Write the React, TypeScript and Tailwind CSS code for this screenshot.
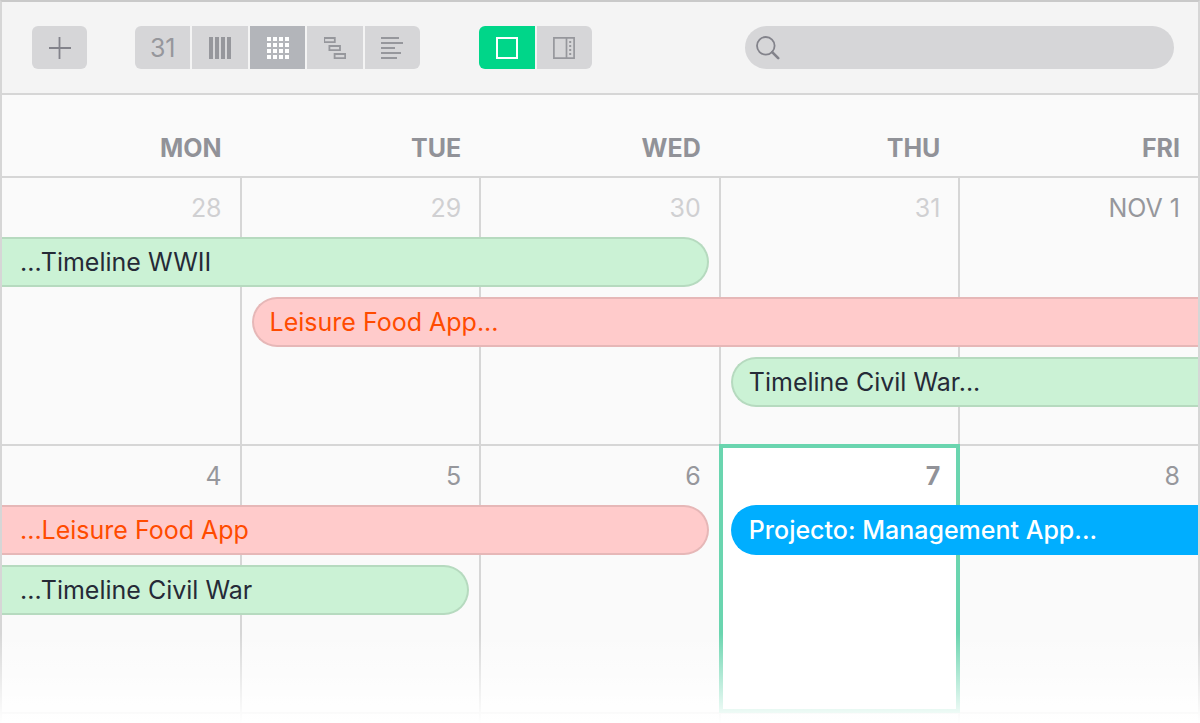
import { useState } from 'react';
import type { ReactNode } from 'react';
import clsx from 'clsx';

type Day = { label: string; muted?: boolean; today?: boolean };
type CalendarEvent = { title: string; tone: 'green' | 'red' | 'blue'; place: string };

const weekdays = ['MON', 'TUE', 'WED', 'THU', 'FRI'];

const columns = ['col-start-1', 'col-start-2', 'col-start-3', 'col-start-4', 'col-start-5'];

const tones = {
  green: 'bg-[#cbf2d5] border-[#b6dabf] text-[#252a37]',
  red: 'bg-[#ffcbcb] border-[#e6b7b7] text-[#ff4b00]',
  blue: 'bg-[#00aeff] border-[#00aeff] text-white font-medium',
};

const weeks: { days: Day[]; events: CalendarEvent[] }[] = [
  {
    days: [
      { label: '28', muted: true },
      { label: '29', muted: true },
      { label: '30', muted: true },
      { label: '31', muted: true },
      { label: 'NOV 1' },
    ],
    events: [
      { title: '...Timeline WWII', tone: 'green', place: 'row-start-2 col-start-1 col-end-4 mr-3 pl-[18px] rounded-r-full border-l-0' },
      { title: 'Leisure Food App...', tone: 'red', place: 'row-start-3 col-start-2 col-end-6 ml-2.5 pl-4 rounded-l-full border-r-0' },
      { title: 'Timeline Civil War...', tone: 'green', place: 'row-start-4 col-start-4 col-end-6 ml-2.5 pl-4 rounded-l-full border-r-0' },
    ],
  },
  {
    days: [{ label: '4' }, { label: '5' }, { label: '6' }, { label: '7', today: true }, { label: '8' }],
    events: [
      { title: '...Leisure Food App', tone: 'red', place: 'row-start-2 col-start-1 col-end-4 mr-3 pl-[18px] rounded-r-full border-l-0' },
      { title: 'Projecto: Management App...', tone: 'blue', place: 'row-start-2 col-start-4 col-end-6 ml-2.5 pl-4 rounded-l-full border-r-0' },
      { title: '...Timeline Civil War', tone: 'green', place: 'row-start-3 col-start-1 col-end-3 mr-3 pl-[18px] rounded-r-full border-l-0' },
    ],
  },
];

function Icon({ children }: { children: ReactNode }) {
  return (
    <svg width="22" height="22" viewBox="0 0 22 22" fill="none" aria-hidden="true">
      {children}
    </svg>
  );
}

const views = [
  { id: 'Day', icon: <span className="text-[25px] leading-6">31</span> },
  {
    id: 'Week',
    icon: (
      <Icon>
        <path d="M0 0h4v22H0zM6 0h4v22H6zM12 0h4v22h-4zM18 0h4v22h-4z" fill="currentColor" />
      </Icon>
    ),
  },
  {
    id: 'Month',
    icon: (
      <Icon>
        {[0, 6, 12, 18].map((y) =>
          [0, 6, 12, 18].map((x) => <rect key={`${x}-${y}`} x={x} y={y} width="4" height="4" fill="currentColor" />)
        )}
      </Icon>
    ),
  },
  {
    id: 'Timeline',
    icon: (
      <Icon>
        <path d="M.2 1h10.6v4.2H.2zM5.4 9h10.6v4.2H5.4zM10.6 17h10.6v4.2H10.6z" stroke="currentColor" strokeWidth="1.8" />
      </Icon>
    ),
  },
  {
    id: 'List',
    icon: (
      <Icon>
        <path d="M0 1h18M0 6h22M0 11h14M0 16h20M0 21h16" stroke="currentColor" strokeWidth="1.8" />
      </Icon>
    ),
  },
];

export default function App() {
  const [view, setView] = useState('Month');
  const [sidebar, setSidebar] = useState(false);
  const [query, setQuery] = useState('');

  return (
    <div className="relative font-['Inter',sans-serif]">
      <div className="flex min-h-screen flex-col overflow-hidden border-x-2 border-t-2 border-x-[#d6d6d6] border-t-[#c9c9c9] bg-[#fafafa]">
        {/* Toolbar */}
        <header className="flex items-center border-b-2 border-[#d6d6d6] bg-[#f4f4f4] py-6 pr-6 pl-[30px] text-[#96979c]">
          <button type="button" aria-label="New event" className="flex h-[43px] w-[55px] items-center justify-center rounded-md bg-[#d6d6d8] text-[#83838b]">
            <Icon>
              <path d="M10.5 0v22M0 11h22" stroke="currentColor" strokeWidth="1.8" />
            </Icon>
          </button>

          <div className="ml-12 flex h-[43px] w-[285px] gap-0.5 overflow-hidden rounded-md">
            {views.map(({ id, icon }) => (
              <button
                key={id}
                type="button"
                aria-label={id}
                onClick={() => setView(id)}
                className={clsx('flex flex-1 items-center justify-center', view === id ? 'bg-[#b3b5ba] text-white' : 'bg-[#d6d6d8]')}
              >
                {icon}
              </button>
            ))}
          </div>

          <div className="ml-[59px] flex h-[43px] w-[113px] gap-0.5 overflow-hidden rounded-md">
            <button
              type="button"
              aria-label="Full view"
              onClick={() => setSidebar(false)}
              className={clsx('flex flex-1 items-center justify-center', sidebar ? 'bg-[#d6d6d8]' : 'bg-[#00d689] text-white')}
            >
              <Icon>
                <rect x="1" y="1" width="20" height="20" stroke="currentColor" strokeWidth="2" />
              </Icon>
            </button>
            <button
              type="button"
              aria-label="Split view"
              onClick={() => setSidebar(true)}
              className={clsx('flex flex-1 items-center justify-center', sidebar ? 'bg-[#00d689] text-white' : 'bg-[#d6d6d8]')}
            >
              <Icon>
                <path d="M.9.9h20.2v20.2H.9zM13.5 1v20" stroke="currentColor" strokeWidth="1.7" />
                <path d="M16.2 4h2v2h-2zM16.2 8h2v2h-2zM16.2 12h2v2h-2zM16.2 16h2v2h-2z" fill="currentColor" />
              </Icon>
            </button>
          </div>

          <label className="ml-auto flex h-[43px] w-[429px] items-center gap-2 rounded-full bg-[#d6d6d8] px-[11px] text-[#83838b]">
            <svg width="24" height="24" viewBox="0 0 24 24" fill="none" stroke="currentColor" strokeLinecap="round" aria-hidden="true">
              <circle cx="9.8" cy="9.8" r="8.8" strokeWidth="1.8" />
              <path d="M16.2 16.2l6 6" strokeWidth="2.6" />
            </svg>
            <input
              type="search"
              aria-label="Search"
              value={query}
              onChange={(e) => setQuery(e.target.value)}
              className="min-w-0 flex-1 bg-transparent text-xl outline-none"
            />
          </label>
        </header>

        {/* Weekday names */}
        <div className="-mr-0.5 grid h-[81px] grid-cols-5 items-end pb-2.5 text-right text-[25px] leading-9 font-bold text-[#919298]">
          {weekdays.map((name) => (
            <div key={name} className="pr-5">{name}</div>
          ))}
        </div>

        {/* Weeks */}
        {weeks.map((week, i) => (
          <section key={i} className="-mr-0.5 grid h-[268px] grid-cols-5 grid-rows-[49px_50px_50px_50px_1fr] gap-y-2.5 border-t-2 border-[#d6d6d6]">
            {week.days.map((day, d) => (
              <div
                key={day.label}
                className={clsx(
                  'row-start-1 row-end-6 text-right text-[25px]',
                  columns[d],
                  day.today
                    ? 'z-10 -mt-0.5 -mb-px -ml-0.5 border-4 border-[#6ad5af] bg-white pr-4 leading-[56px] font-bold text-[#919298]'
                    : 'border-r-2 border-[#d6d6d6] pr-[18px] leading-[60px]',
                  !day.today && (day.muted ? 'text-[#d0d0d2]' : 'text-[#96979c]')
                )}
              >
                {day.label}
              </div>
            ))}
            {week.events.map((event) => (
              <div
                key={event.title}
                className={clsx('z-20 truncate border-2 text-[25px] leading-[46px]', tones[event.tone], event.place)}
              >
                {event.title}
              </div>
            ))}
          </section>
        ))}

        {/* Start of the next week, under the fade */}
        <div className="-mr-0.5 grid min-h-[11px] flex-1 grid-cols-5 border-t-2 border-[#d6d6d6]">
          {weekdays.map((name) => (
            <div key={name} className="border-r-2 border-[#d6d6d6]" />
          ))}
        </div>
      </div>

      <div className="pointer-events-none absolute inset-x-0 bottom-0 z-30 h-[90px] bg-linear-to-b from-white/0 to-white" />
    </div>
  );
}
